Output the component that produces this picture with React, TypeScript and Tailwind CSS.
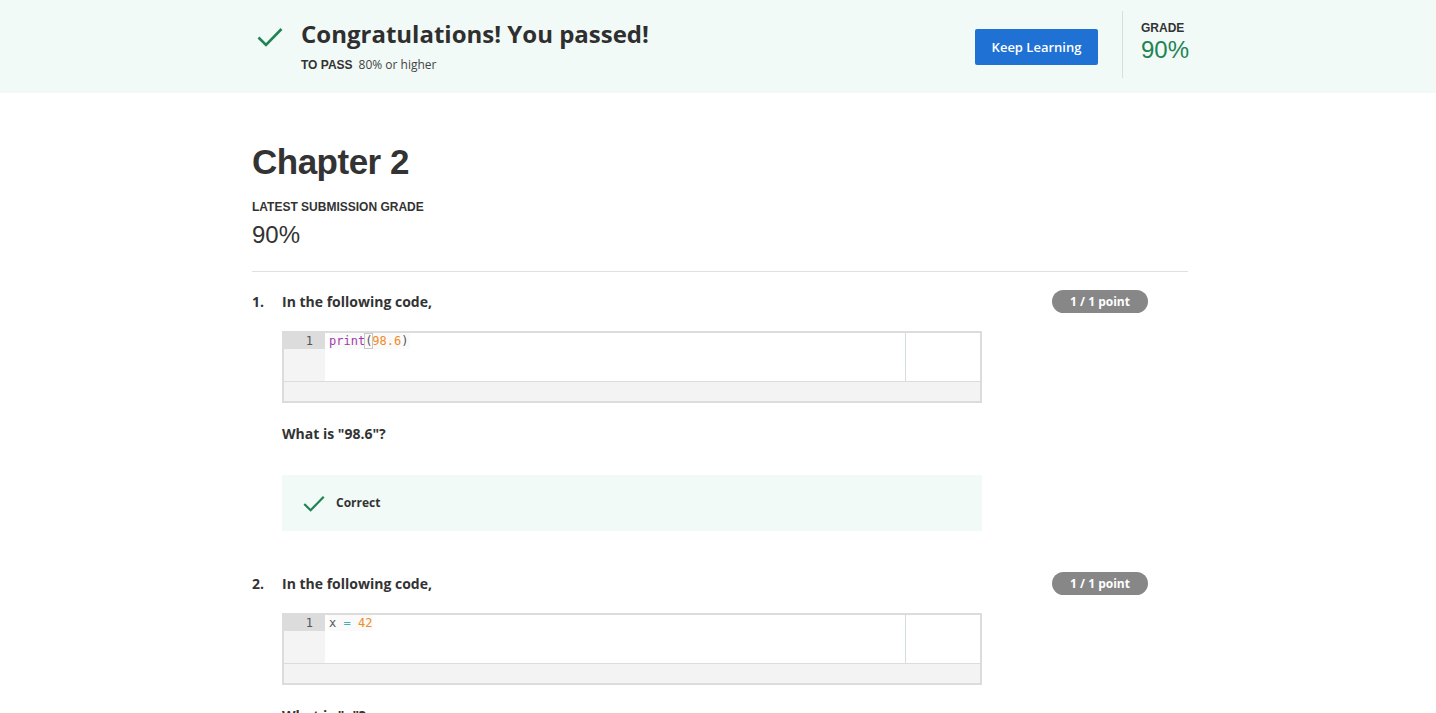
const SANS = "font-['Open_Sans',sans-serif]"
const ARIAL = "font-['Liberation_Sans',Arial,sans-serif]"

type Token = { text: string; className: string }

const QUESTIONS: Array<{ title: string; code: Token[]; prompt: string }> = [
  {
    title: 'In the following code,',
    code: [
      { text: 'print', className: 'text-[#a33aac]' },
      { text: '(', className: 'text-[#555] outline outline-1 outline-[#c8c8c8]' },
      { text: '98.6', className: 'text-[#f28c1e]' },
      { text: ')', className: 'text-[#555]' },
    ],
    prompt: 'What is "98.6"?',
  },
  {
    title: 'In the following code,',
    code: [
      { text: 'x ', className: 'text-[#555]' },
      { text: '=', className: 'text-[#3ab0b8]' },
      { text: ' 42', className: 'text-[#f28c1e]' },
    ],
    prompt: 'What is "x"?',
  },
]

function Check({ className }: { className: string }) {
  return (
    <svg viewBox="0 0 26 20" className={className} fill="none">
      <path d="M1.5 10.5 L9 18 L24.5 2" stroke="#1f8354" strokeWidth="2.6" />
    </svg>
  )
}

function CodeBox({ code }: { code: Token[] }) {
  return (
    <div className="ml-[30px] w-[700px] border-2 border-[#dcdcdc] bg-white">
      <div className="flex h-[49px] border-b border-[#dcdcdc]">
        <div className="w-[41px] bg-[#f4f4f4]">
          <div className="h-[16px] bg-[#dcdcdc] pr-[12px] text-right font-['DejaVu_Sans_Mono',monospace] text-[12px] leading-[16px] text-[#555]">
            1
          </div>
        </div>
        <div className="flex-1 border-r border-[#d3dbe3] pl-[4px] font-['DejaVu_Sans_Mono',monospace] text-[12px] leading-[16px]">
          <div className="w-fit bg-[#fafafa] pr-[1px] whitespace-pre">
            {code.map((t, i) => (
              <span key={i} className={t.className}>
                {t.text}
              </span>
            ))}
          </div>
        </div>
        <div className="w-[74px]" />
      </div>
      <div className="h-[19px] bg-[#f3f3f3]" />
    </div>
  )
}

export default function App() {
  return (
    <div className={`min-h-screen bg-white text-[#333] ${SANS}`}>
      <header className="h-[93px] bg-[#f2faf7] pl-[4px]">
        <div className="mx-auto flex w-[936px] items-start">
          <Check className="mt-[27px] ml-[5px] h-[20px] w-[26px]" />
          <div className="ml-[18px] pt-[18px]">
            <h1 className="text-[24px] leading-[32px] font-bold text-[#2f2f2f]">Congratulations! You passed!</h1>
            <p className="mt-[7px] text-[12px] leading-[16px] text-[#444]">
              <span className={`${ARIAL} font-bold text-[#333]`}>TO PASS</span>
              <span className="ml-[6px]">80% or higher</span>
            </p>
          </div>
          <div className="ml-auto flex items-start">
            <button
              type="button"
              className="mt-[29px] h-[36px] w-[123px] rounded-[2px] bg-[#2071d4] pt-[1px] text-[13px] font-semibold text-white"
            >
              Keep Learning
            </button>
            <div className="mt-[11px] ml-[24px] h-[67px] w-px bg-[#dcdcdc]" />
            <div className={`${ARIAL} ml-[18px] w-[47px] pt-[20px]`}>
              <div className="text-[12px] leading-[16px] font-bold text-[#333]">GRADE</div>
              <div className="text-[24px] leading-[28px] text-[#1f8354]">90%</div>
            </div>
          </div>
        </div>
      </header>

      <main className="pl-[4px]">
        <div className="mx-auto w-[936px]">
          <h2 className={`${ARIAL} mt-[47px] text-[35px] leading-[44px] font-bold tracking-[-0.5px] text-[#333]`}>
            Chapter 2
          </h2>
          <div className={`${ARIAL} mt-[15px] text-[12px] leading-[16px] font-bold text-[#333]`}>
            LATEST SUBMISSION GRADE
          </div>
          <div className={`${ARIAL} mt-[4px] text-[24px] leading-[32px] text-[#333]`}>90%</div>
          <div className="mt-[20px] h-px bg-[#e0e0e0]" />

          {QUESTIONS.map((q, i) => (
            <section key={i} className={i === 0 ? 'mt-[18px]' : 'mt-[41px]'}>
              <div className="flex h-[23px] items-center">
                <span className="w-[30px] text-[14px] font-bold">{i + 1}.</span>
                <span className="flex-1 text-[14px] font-bold">{q.title}</span>
                <span className="mr-[40px] flex h-[23px] w-[96px] items-center justify-center rounded-full bg-[#878787] text-[12px] font-bold text-white">
                  1 / 1 point
                </span>
              </div>
              <div className="mt-[18px]">
                <CodeBox code={q.code} />
              </div>
              <p className="mt-[21px] ml-[30px] text-[14px] leading-[20px] font-bold">{q.prompt}</p>
              <div className="mt-[31px] ml-[30px] flex h-[56px] w-[700px] items-center bg-[#f2faf7] pl-[21px]">
                <Check className="h-[17px] w-[22px]" />
                <span className="ml-[11px] text-[12px] font-bold text-[#333]">Correct</span>
              </div>
            </section>
          ))}
        </div>
      </main>
    </div>
  )
}
